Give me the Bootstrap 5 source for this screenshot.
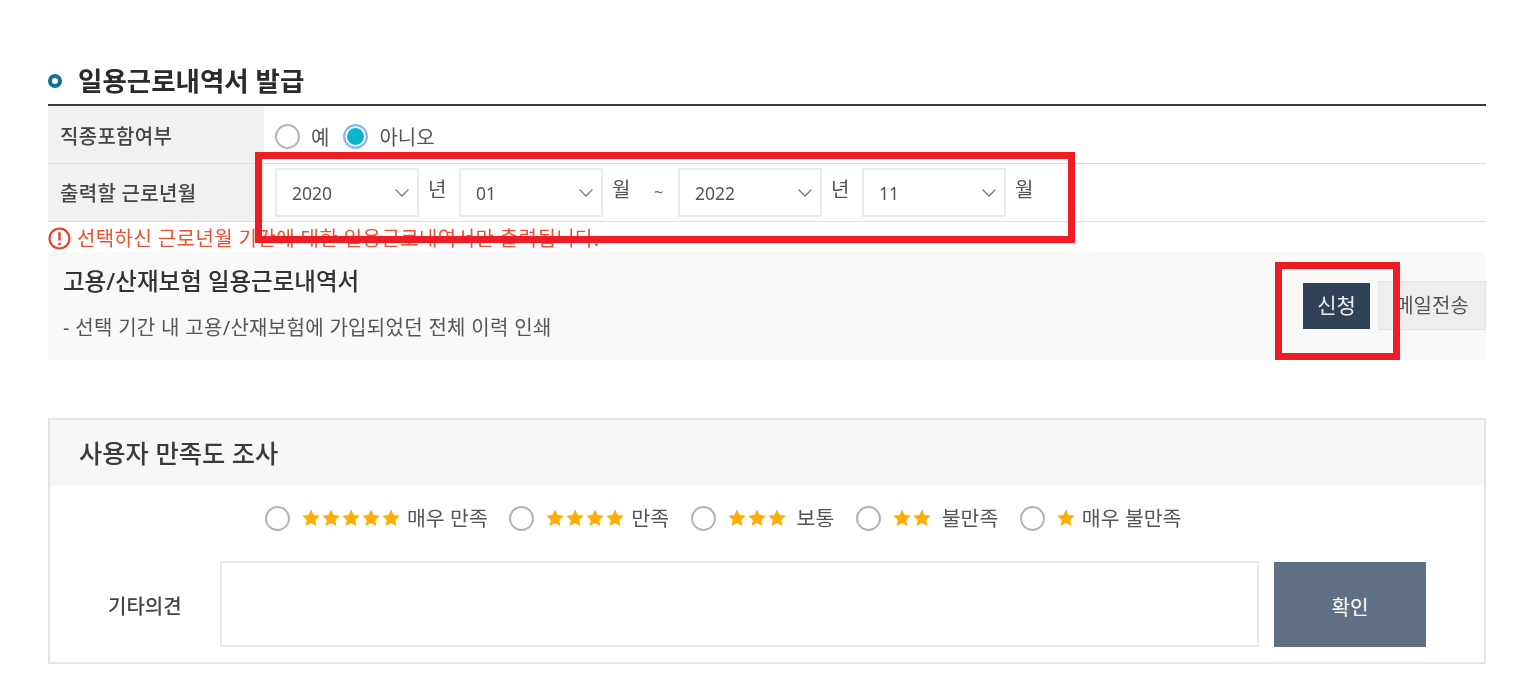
<!doctype html>
<html lang="ko">
  <head>
    <meta charset="utf-8">
    <meta name="viewport" content="width=device-width, initial-scale=1">
    <title>일용근로내역서 발급</title>
    <link href="https://cdn.jsdelivr.net/npm/bootstrap@5.3.4/dist/css/bootstrap.min.css" rel="stylesheet">
    <style>
      body { font-family: "Noto Sans", "Noto Sans CJK KR", sans-serif; color: #444; background: #fff; overflow: hidden; }
      .page-wrap { position: relative; height: 679px; padding: 62px 41px 0 48px; filter: blur(.6px); }
      .page-title { height: 42px; padding-bottom: 4px; font-size: 26.5px; line-height: 36px; font-weight: 700; color: #2b2b2b; margin: 0; gap: 16px; }
      .title-dot { width: 14px; height: 14px; border: 4px solid #0f7390; border-radius: 50%; }
      .form-area { border-top: 2px solid #3a3a3a; }
      .form-line { border-bottom: 1px solid #dedede; }
      .line-one { height: 58px; }
      .line-two { height: 58px; }
      .line-label { width: 216px; background: #f1f1f1; padding-left: 12px; font-size: 20px; letter-spacing: .3px; color: #444; font-weight: 500; line-height: 60px; overflow: hidden; }
      .line-one .line-label { line-height: 62px; }
      .line-one .line-body { padding-top: 3px; }
      .line-body { padding-left: 11px; font-size: 20px; color: #555; }
      .round-check { width: 25px; height: 25px; margin: 0; flex: none; border: 2px solid #b4b4b4; }
      .round-check:checked { background-color: #0bb4cc; border-color: #8db8f0; box-shadow: inset 0 0 0 2px #fff; background-image: none; }
      .opt-word { margin-left: 11px; margin-right: 14px; padding-top: 4px; }
      .date-select { --bs-form-select-bg-img: url("data:image/svg+xml,%3csvg xmlns='http://www.w3.org/2000/svg' viewBox='0 0 16 16'%3e%3cpath fill='none' stroke='%23777' stroke-linecap='round' stroke-width='1.3' d='M2 5l6 6 6-6'/%3e%3c/svg%3e"); width: 144px; height: 49px; border: 2px solid #e8eaee; border-radius: 0; font-size: 17.5px; color: #555; padding: 1px 30px 0 15px; background-size: 20px 16px; background-position: right 5px center; flex: none; font-family: "Noto Sans", sans-serif; }
      .date-unit { width: 40px; padding-left: 9px; margin-top: -5px; }
      .date-tilde { width: 35px; padding-left: 11px; margin-top: -2px; color: #666; font-size: 16px; }
      .notice-text { height: 30px; padding-top: 3px; color: #f0502f; font-size: 20px; letter-spacing: .4px; gap: 6px; line-height: 30px; }
      .notice-icon { width: 23px; height: 23px; flex: none; }
      .apply-box { height: 108px; background: #f9f9f9; padding: 13px 0 0 15px; }
      .apply-name { font-size: 23.5px; font-weight: 500; color: #333; line-height: 32px; }
      .apply-desc { font-size: 20px; letter-spacing: .3px; color: #555; margin-top: 17px; line-height: 28px; }
      .apply-btns { margin-top: 18px; gap: 8px; }
      .btn-apply { width: 67px; height: 46px; padding: 0; border-radius: 0; border: 0; background: #2f4258; color: #e9edf1; font-size: 21px; }
      .btn-mail { width: 108px; height: 49px; padding: 0; margin-top: -2px; border-radius: 0; border: 1px solid #e4e4e4; background: #eee; color: #555; font-size: 20px; }
      .survey-box { margin-top: 58px; height: 246px; border: 2px solid #e4e4e4; }
      .survey-head { height: 66px; background: #f7f7f7; padding-left: 29px; font-size: 25.3px; font-weight: 500; color: #3a3a3a; line-height: 66px; }
      .survey-opts { height: 75px; padding: 3px 0 0 215px; gap: 21.5px; font-size: 20.5px; color: #555; }
      .survey-opt { display: flex; align-items: center; height: 58px; margin: 0; }
      .star-row { display: flex; margin-left: 11px; margin-right: 6px; }
      .star-icon { width: 20px; height: 20px; fill: #ffae00; display: block; }
      .star-gap { margin-left: 4px; }
      .survey-foot { padding-left: 58px; }
      .foot-label { width: 112px; padding-top: 6px; font-size: 20px; font-weight: 500; color: #444; }
      .opinion-input { width: 1039px; height: 86px; border: 2px solid #e8e8e8; border-radius: 0; resize: none; }
      .btn-confirm { width: 152px; height: 85px; margin-left: 15px; border: 0; border-radius: 0; background: #5f7085; color: #fff; font-size: 20px; padding: 7px 0 0; }
      .red-frame { position: absolute; border: 7px solid #ee1c25; pointer-events: none; }
      .frame-date { left: 255px; top: 152px; width: 820px; height: 91px; }
      .frame-btn { left: 1275px; top: 262px; width: 125px; height: 98px; }
    </style>
  </head>
  <body>
    <svg class="d-none">
      <symbol id="star" viewBox="0 0 24 24"><path d="M12 1.8l3.1 6.7 7.4.9-5.5 5 1.5 7.3L12 18.1l-6.5 3.6L7 14.4l-5.5-5 7.4-.9z" stroke-linejoin="round"/></symbol>
    </svg>
    <div class="page-wrap">
      <h2 class="page-title d-flex align-items-center">
        <span class="title-dot"></span>
        <span>일용근로내역서 발급</span>
      </h2>

      <!-- form table -->
      <div class="form-area">
        <div class="form-line line-one d-flex">
          <div class="line-label">직종포함여부</div>
          <div class="line-body d-flex align-items-center">
            <input class="form-check-input round-check" type="radio" name="jobType">
            <span class="opt-word">예</span>
            <input class="form-check-input round-check" type="radio" name="jobType" checked>
            <span class="opt-word">아니오</span>
          </div>
        </div>
        <div class="form-line line-two d-flex">
          <div class="line-label">출력할 근로년월</div>
          <div class="line-body d-flex align-items-center">
            <select class="form-select date-select"><option>2020</option></select>
            <span class="date-unit">년</span>
            <select class="form-select date-select"><option>01</option></select>
            <span class="date-unit">월</span>
            <span class="date-tilde">~</span>
            <select class="form-select date-select"><option>2022</option></select>
            <span class="date-unit">년</span>
            <select class="form-select date-select"><option>11</option></select>
            <span class="date-unit">월</span>
          </div>
        </div>
      </div>

      <div class="notice-text d-flex align-items-center">
        <svg class="notice-icon" viewBox="0 0 24 24" fill="none" stroke="#e8402a" stroke-width="2.2"><circle cx="12" cy="12" r="10.4"/><path d="M12 5.5v8.5M12 16.4v2.4" stroke-width="2.6"/></svg>
        <span>선택하신 근로년월 기간에 대한 일용근로내역서만 출력됩니다.</span>
      </div>

      <div class="apply-box d-flex justify-content-between">
        <div>
          <div class="apply-name">고용/산재보험 일용근로내역서</div>
          <div class="apply-desc">- 선택 기간 내 고용/산재보험에 가입되었던 전체 이력 인쇄</div>
        </div>
        <div class="apply-btns d-flex">
          <button type="button" class="btn btn-apply">신청</button>
          <button type="button" class="btn btn-mail">메일전송</button>
        </div>
      </div>

      <!-- survey -->
      <div class="survey-box">
        <div class="survey-head">사용자 만족도 조사</div>
        <div class="survey-opts d-flex">
          <label class="survey-opt">
            <input class="form-check-input round-check" type="radio" name="score">
            <span class="star-row">
              <svg class="star-icon"><use href="#star"/></svg><svg class="star-icon"><use href="#star"/></svg><svg class="star-icon"><use href="#star"/></svg><svg class="star-icon"><use href="#star"/></svg><svg class="star-icon"><use href="#star"/></svg>
            </span>
            <span>매우 만족</span>
          </label>
          <label class="survey-opt">
            <input class="form-check-input round-check" type="radio" name="score">
            <span class="star-row">
              <svg class="star-icon"><use href="#star"/></svg><svg class="star-icon"><use href="#star"/></svg><svg class="star-icon"><use href="#star"/></svg><svg class="star-icon"><use href="#star"/></svg>
            </span>
            <span>만족</span>
          </label>
          <label class="survey-opt">
            <input class="form-check-input round-check" type="radio" name="score">
            <span class="star-row">
              <svg class="star-icon"><use href="#star"/></svg><svg class="star-icon"><use href="#star"/></svg><svg class="star-icon"><use href="#star"/></svg>
            </span>
            <span class="star-gap">보통</span>
          </label>
          <label class="survey-opt">
            <input class="form-check-input round-check" type="radio" name="score">
            <span class="star-row">
              <svg class="star-icon"><use href="#star"/></svg><svg class="star-icon"><use href="#star"/></svg>
            </span>
            <span class="star-gap">불만족</span>
          </label>
          <label class="survey-opt">
            <input class="form-check-input round-check" type="radio" name="score">
            <span class="star-row">
              <svg class="star-icon"><use href="#star"/></svg>
            </span>
            <span>매우 불만족</span>
          </label>
        </div>
        <div class="survey-foot d-flex align-items-center">
          <div class="foot-label">기타의견</div>
          <textarea class="form-control opinion-input"></textarea>
          <button type="button" class="btn btn-confirm">확인</button>
        </div>
      </div>

      <div class="red-frame frame-date"></div>
      <div class="red-frame frame-btn"></div>
    </div>
    <script src="https://cdn.jsdelivr.net/npm/bootstrap@5.3.4/dist/js/bootstrap.bundle.min.js"></script>
  </body>
</html>
